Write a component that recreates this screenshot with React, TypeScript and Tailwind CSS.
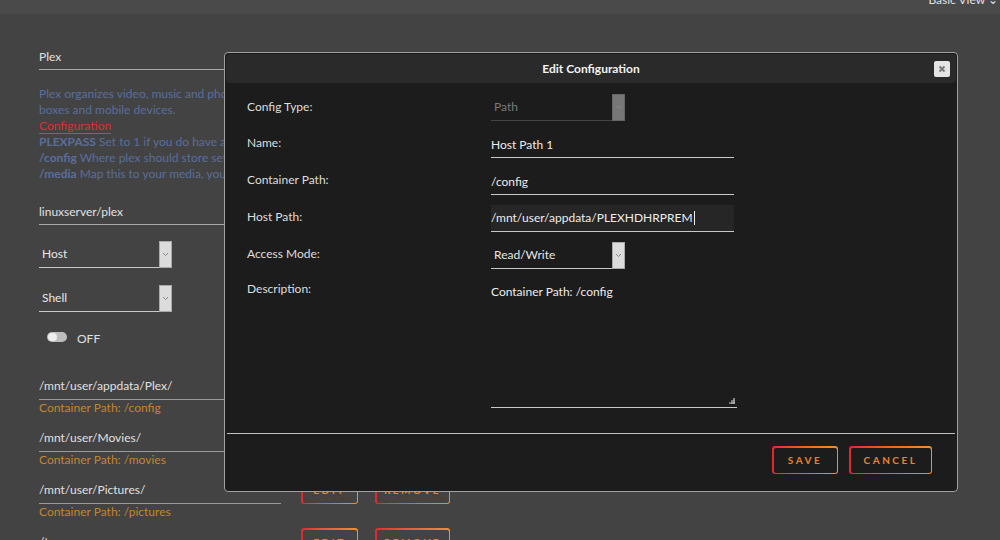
import React from "react";

const font = { fontFamily: "Lato, 'Noto Sans', sans-serif" };

const Chevron = ({ color = "#888" }: { color?: string }) => (
  <svg width="7" height="5" viewBox="0 0 7 5">
    <polyline points="1,1 3.5,3.5 6,1" fill="none" stroke={color} strokeWidth="1" />
  </svg>
);

const Select = ({
  value,
  width,
  disabled,
}: {
  value: string;
  width: string;
  disabled?: boolean;
}) => (
  <div className={`flex h-[27px] ${width}`}>
    <div
      className={`flex-1 flex items-center pl-[3px] border-b ${
        disabled ? "border-[#444] text-[#7a7a7a]" : "border-[#c8c8c8] text-[#e6e6e6]"
      }`}
    >
      {value}
    </div>
    <div
      className={`w-[13px] flex items-center justify-center border ${
        disabled ? "bg-[#777] border-[#666]" : "bg-[#dcdcdc] border-[#aaa]"
      }`}
    >
      <Chevron color={disabled ? "#8a8a8a" : "#888"} />
    </div>
  </div>
);

const GradButton = ({
  label,
  width,
  bg,
}: {
  label: string;
  width: string;
  bg: string;
}) => (
  <div className={`p-[1.5px] rounded-[3px] bg-linear-to-r from-[#e0262e] to-[#f0902e] ${width} h-[28px]`}>
    <div
      className={`w-full h-full rounded-[2px] flex items-center justify-center text-[10px] font-bold tracking-[2.5px] text-[#e8842c] ${bg}`}
    >
      {label}
    </div>
  </div>
);

const PathRow = ({ host, container }: { host: string; container: string }) => (
  <div className="flex flex-col mb-[8px]">
    <div className="flex items-end gap-[20px]">
      <div className="w-[242px] h-[28px] flex items-center border-b border-[#9a9a9a] text-[#e0e0e0]">
        {host}
      </div>
      <div className="flex gap-[17px]">
        <GradButton label="EDIT" width="w-[57px]" bg="bg-[#434343]" />
        <GradButton label="REMOVE" width="w-[75px]" bg="bg-[#434343]" />
      </div>
    </div>
    <div className="text-[#c5852e] h-[16px] flex items-center">{container}</div>
  </div>
);

export default function App() {
  return (
    <div className="relative w-[1000px] h-[540px] overflow-hidden bg-[#434343] text-[12px]" style={font}>
      <div className="h-[14px] bg-[#4a4a4a] flex justify-end pr-[2px]">
        <span className="-mt-[9px] text-[#e0e0e0] text-[12px]">Basic View ⌄</span>
      </div>

      {/* background form */}
      <div className="pl-[39px] pt-[34px] flex flex-col">
        <div className="w-[242px] h-[22px] border-b border-[#a8a8a8] text-[#e0e0e0]">Plex</div>
        <div className="mt-[16px] w-[400px] leading-[16px] text-[#5a6e9c]">
          <div className="whitespace-nowrap">
            Plex organizes video, music and photos from personal media libraries and streams them to smart TVs, streaming
          </div>
          <div>boxes and mobile devices.</div>
          <div>
            <span className="text-[#d93232] border-b border-[#6c6c78]">Configuration</span>
          </div>
          <div className="whitespace-nowrap">
            <b>PLEXPASS</b> Set to 1 if you do have a Plex Pass.
          </div>
          <div className="whitespace-nowrap">
            <b>/config</b> Where plex should store settings.
          </div>
          <div className="whitespace-nowrap">
            <b>/media</b> Map this to your media, your library.
          </div>
        </div>
        <div className="mt-[21px] w-[242px] h-[22px] border-b border-[#a8a8a8] text-[#e0e0e0]">linuxserver/plex</div>
        <div className="mt-[16px]">
          <Select value="Host" width="w-[133px]" />
        </div>
        <div className="mt-[17px]">
          <Select value="Shell" width="w-[133px]" />
        </div>
        <div className="mt-[18px] ml-[8px] flex items-center gap-[10px] h-[14px]">
          <div className="w-[20px] h-[10px] rounded-full bg-[#bdbdbd] flex items-center pl-[1px]">
            <div className="w-[9px] h-[8px] rounded-full bg-[#eeeeee]" />
          </div>
          <span className="text-[#e0e0e0] mt-[3px]">OFF</span>
        </div>
        <div className="mt-[28px] flex flex-col">
          <PathRow host="/mnt/user/appdata/Plex/" container="Container Path: /config" />
          <PathRow host="/mnt/user/Movies/" container="Container Path: /movies" />
          <PathRow host="/mnt/user/Pictures/" container="Container Path: /pictures" />
          <PathRow host="/tmp" container="Container Path: /transcode" />
        </div>
      </div>

      {/* modal */}
      <div className="absolute left-[224px] top-[52px] w-[734px] h-[440px] rounded-[4px] border border-[#a0a0a0] bg-[#1c1c1c] p-[1px] flex flex-col">
        <div className="relative h-[29px] rounded-[4px] bg-[#2a2a2a] flex items-center justify-center">
          <span className="font-bold text-[#f2f2f2] text-[12px]">Edit Configuration</span>
          <div className="absolute right-[6px] top-[7px] w-[16px] h-[16px] rounded-[2px] bg-[#e4e4e4] flex items-center justify-center">
            <svg width="8" height="8" viewBox="0 0 8 8">
              <path d="M1.5 1.5 L6.5 6.5 M6.5 1.5 L1.5 6.5" stroke="#7a7a7a" strokeWidth="2" />
            </svg>
          </div>
        </div>

        <div className="pl-[21px] pt-[11px] grid grid-cols-[244px_246px] gap-y-[10px] text-[#dedede]">
          <div className="h-[27px] flex items-center -mt-[1px]">Config Type:</div>
          <Select value="Path" width="w-[134px]" disabled />

          <div className="h-[27px] flex items-center -mt-[2px]">Name:</div>
          <div className="w-[243px] h-[27px] flex items-center border-b border-[#c8c8c8] text-[#ececec] pt-[1px]">
            Host Path 1
          </div>

          <div className="h-[27px] flex items-center -mt-[2px]">Container Path:</div>
          <div className="w-[243px] h-[27px] flex items-center border-b border-[#c8c8c8] text-[#ececec] pt-[1px]">
            /config
          </div>

          <div className="h-[27px] flex items-center -mt-[2px]">Host Path:</div>
          <div className="w-[243px] h-[27px] flex items-center border-b border-[#c8c8c8] bg-[#262626] text-[#ececec]">
            /mnt/user/appdata/PLEXHDHRPREM
            <span className="inline-block w-px h-[14px] bg-[#eee] ml-px" />
          </div>

          <div className="h-[27px] flex items-center -mt-[2px]">Access Mode:</div>
          <Select value="Read/Write" width="w-[134px]" />

          <div className="h-[20px] flex items-center">Description:</div>
          <div className="relative w-[246px] h-[129px] border-b border-[#c8c8c8] text-[#ececec] pt-[4px]">
            Container Path: /config
            <svg className="absolute right-[2px] bottom-[2px]" width="7" height="7" viewBox="0 0 7 7">
              <rect x="5" y="0" width="2" height="2" fill="#888" />
              <rect x="3" y="2" width="2" height="2" fill="#777" />
              <rect x="5" y="2" width="2" height="2" fill="#999" />
              <rect x="1" y="4" width="2" height="2" fill="#777" />
              <rect x="3" y="4" width="2" height="2" fill="#999" />
              <rect x="5" y="4" width="2" height="2" fill="#aaa" />
            </svg>
          </div>
        </div>

        <div className="mt-[25px] mx-[1px] border-t border-[#c0c0c0]" />

        <div className="flex justify-end gap-[11px] pr-[24px] pt-[12px]">
          <GradButton label="SAVE" width="w-[66px]" bg="bg-[#1c1c1c]" />
          <GradButton label="CANCEL" width="w-[83px]" bg="bg-[#1c1c1c]" />
        </div>
      </div>
    </div>
  );
}
